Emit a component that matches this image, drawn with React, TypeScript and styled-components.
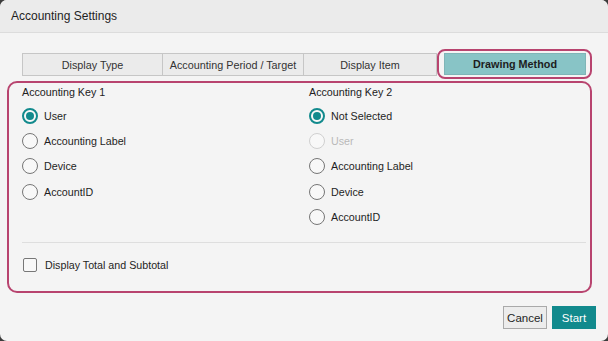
import React from "react";
import styled, { createGlobalStyle } from "styled-components";

const Global = createGlobalStyle`
  html, body { margin: 0; padding: 0; background: #3c3c3c; }
  body { font-family: "Liberation Sans", Arial, sans-serif; color: #222; }
  * { box-sizing: border-box; }
`;

const Dialog = styled.div`
  width: 608px;
  height: 341px;
  background: #f4f4f4;
  border-radius: 7px;
  overflow: hidden;
  display: flex;
  flex-direction: column;
`;

const Header = styled.div`
  height: 33px;
  background: #ebebeb;
  border-bottom: 1px solid #dcdcdc;
  display: flex;
  align-items: center;
  padding: 0 0 1px 11px;
  font-size: 12px;
  color: #1e1e1e;
`;

const TabRow = styled.div`
  display: flex;
  align-items: center;
  margin-top: 16px;
  padding-left: 22px;
  height: 30px;
`;

const Tab = styled.div<{ $w: number }>`
  width: ${(p) => p.$w}px;
  height: 23px;
  margin-top: 1px;
  background: #ebebeb;
  border: 1px solid #c6c6c6;
  border-left-width: 0;
  display: flex;
  align-items: center;
  justify-content: center;
  font-size: 10.8px;
  color: #333;
  &:first-child { border-left-width: 1px; }
`;

const ActiveWrap = styled.div`
  width: 155px;
  height: 30px;
  border: 2px solid #b8446f;
  border-radius: 8px;
  padding: 2px 4px 2px 5px;
`;

const ActiveTab = styled.div`
  height: 22px;
  background: #88c4c6;
  border: 1px solid #7fb5b7;
  display: flex;
  align-items: center;
  justify-content: center;
  font-size: 10.8px;
  font-weight: bold;
  color: #1d1d1d;
`;

const Panel = styled.div`
  margin: 2px 16px 0 7px;
  height: 212px;
  border: 2px solid #b8446f;
  border-radius: 10px;
  padding: 0 4px 0 13px;
  display: flex;
  flex-direction: column;
`;

const Columns = styled.div`
  display: grid;
  grid-template-columns: 287px 1fr;
  padding-top: 2px;
`;

const Column = styled.div`
  display: flex;
  flex-direction: column;
`;

const ColTitle = styled.div`
  height: 14px;
  line-height: 14px;
  font-size: 10.7px;
  color: #222;
  margin-bottom: 4px;
`;

const RadioRow = styled.label<{ $disabled?: boolean }>`
  display: flex;
  align-items: center;
  height: 25.3px;
  gap: 6px;
  font-size: 10.7px;
  color: ${(p) => (p.$disabled ? "#b9b9b9" : "#1e1e1e")};
`;

const RadioCircle = styled.span<{ $checked?: boolean; $disabled?: boolean }>`
  width: 16px;
  height: 16px;
  border-radius: 50%;
  border: ${(p) =>
    p.$checked ? "2px solid #128a8d" : p.$disabled ? "1.5px solid #d0d0d0" : "1.5px solid #767676"};
  background: #f8f8f8;
  display: flex;
  align-items: center;
  justify-content: center;
  flex: none;
  &::after {
    content: "";
    display: ${(p) => (p.$checked ? "block" : "none")};
    width: 8px;
    height: 8px;
    border-radius: 50%;
    background: #128a8d;
  }
`;

const Separator = styled.div`
  height: 1px;
  background: #dedede;
  margin-top: 13px;
`;

const CheckRow = styled.label`
  display: flex;
  align-items: center;
  gap: 8px;
  margin-top: 15px;
  margin-left: 1px;
  font-size: 10.7px;
  color: #1e1e1e;
`;

const CheckBox = styled.span`
  width: 14px;
  height: 14px;
  border: 1.5px solid #777;
  border-radius: 2px;
  background: #f8f8f8;
`;

const Footer = styled.div`
  display: flex;
  justify-content: flex-end;
  gap: 5px;
  padding: 13px 12px 0 0;
`;

const Button = styled.button<{ $primary?: boolean }>`
  height: 23px;
  width: 44px;
  padding: 0;
  font-family: "Liberation Sans", Arial, sans-serif;
  font-size: 11.5px;
  border: 1px solid ${(p) => (p.$primary ? "#128a8d" : "#a9a9a9")};
  background: ${(p) => (p.$primary ? "#128a8d" : "#ececec")};
  color: ${(p) => (p.$primary ? "#fff" : "#1e1e1e")};
`;

type Opt = { label: string; checked?: boolean; disabled?: boolean };

const Radio = ({ label, checked, disabled }: Opt) => (
  <RadioRow $disabled={disabled}>
    <RadioCircle $checked={checked} $disabled={disabled} />
    {label}
  </RadioRow>
);

const key1: Opt[] = [
  { label: "User", checked: true },
  { label: "Accounting Label" },
  { label: "Device" },
  { label: "AccountID" },
];

const key2: Opt[] = [
  { label: "Not Selected", checked: true },
  { label: "User", disabled: true },
  { label: "Accounting Label" },
  { label: "Device" },
  { label: "AccountID" },
];

export default function App() {
  return (
    <>
      <Global />
      <Dialog>
        <Header>Accounting Settings</Header>
        <TabRow>
          <Tab $w={141}>Display Type</Tab>
          <Tab $w={141}>Accounting Period / Target</Tab>
          <Tab $w={133}>Display Item</Tab>
          <ActiveWrap>
            <ActiveTab>Drawing Method</ActiveTab>
          </ActiveWrap>
        </TabRow>
        <Panel>
          <Columns>
            <Column>
              <ColTitle>Accounting Key 1</ColTitle>
              {key1.map((o) => (
                <Radio key={o.label} {...o} />
              ))}
            </Column>
            <Column>
              <ColTitle>Accounting Key 2</ColTitle>
              {key2.map((o) => (
                <Radio key={o.label} {...o} />
              ))}
            </Column>
          </Columns>
          <Separator />
          <CheckRow>
            <CheckBox />
            Display Total and Subtotal
          </CheckRow>
        </Panel>
        <Footer>
          <Button>Cancel</Button>
          <Button $primary>Start</Button>
        </Footer>
      </Dialog>
    </>
  );
}
